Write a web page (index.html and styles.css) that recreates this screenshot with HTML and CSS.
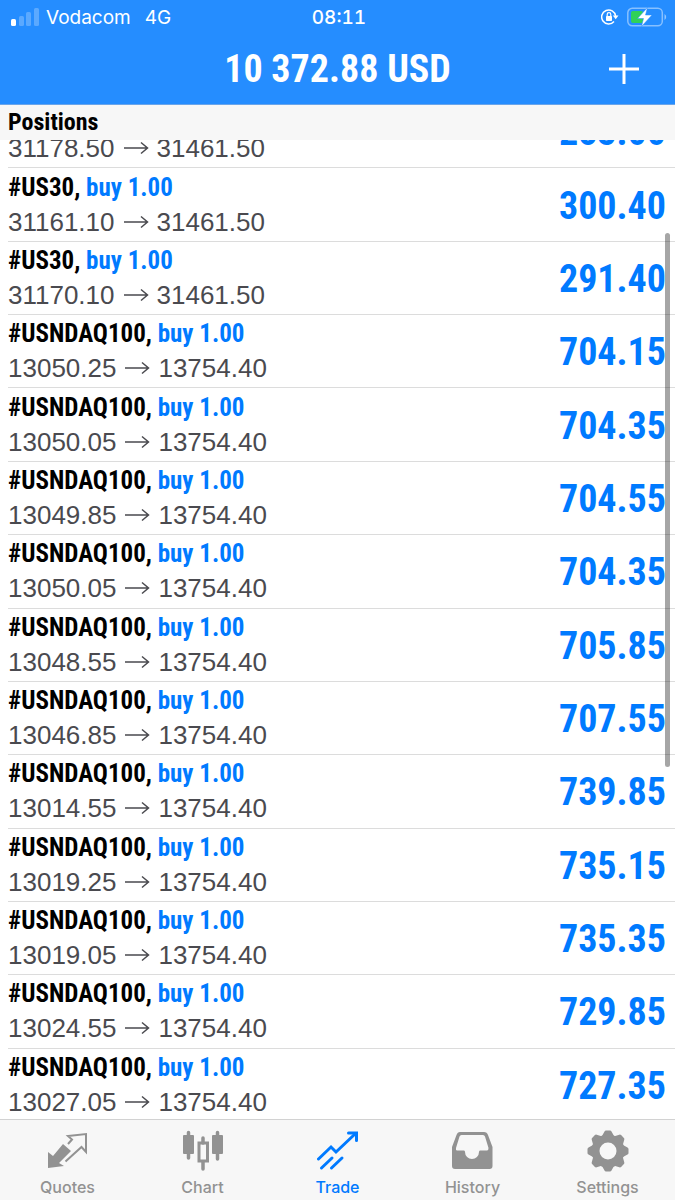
FILE: index.html
```html
<!DOCTYPE html>
<html lang="en">
<head>
  <meta charset="UTF-8">
  <meta name="viewport" content="width=device-width, initial-scale=1">
  <title>Trade</title>
  <link rel="stylesheet" href="styles.css">
</head>
<body>
  <svg class="defs" aria-hidden="true">
    <symbol id="arrow" viewBox="0 0 26 14">
      <path d="M1 7H24M18 1.500L24.500 7L18 12.500" fill="none" stroke="currentColor" stroke-width="1.500"/>
    </symbol>
  </svg>
  <div class="app">
    <header class="header">
      <div class="status">
        <div class="carrier">
          <svg width="28" height="18" viewBox="0 0 28 18" fill="#fff" aria-hidden="true">
            <rect x="0" y="11" width="5" height="7" rx="1.500"/>
            <rect x="8" y="8" width="5" height="10" rx="1.500" opacity=".25"/>
            <rect x="15" y="4" width="5" height="14" rx="1.500" opacity=".25"/>
            <rect x="23" y="0" width="5" height="18" rx="1.500" opacity=".25"/>
          </svg>
          <span>Vodacom</span>
          <span class="network">4G</span>
        </div>
        <span class="time">08:11</span>
        <div class="indicators">
          <svg width="18" height="16" viewBox="0 0 18 16" aria-hidden="true">
            <path d="M13 12.500A7 7 0 1 1 14.600 7" fill="none" stroke="#fff" stroke-width="1.500"/>
            <path d="M11.800 6.500H17.500L14.700 10.200Z" fill="#fff"/>
            <rect x="5" y="7" width="6" height="5" rx=".7" fill="#fff"/>
            <path d="M6.200 7.500V5.500A1.800 1.800 0 0 1 9.800 5.500V7.500" fill="none" stroke="#fff" stroke-width="1.200"/>
          </svg>
          <svg width="40" height="20" viewBox="0 0 40 20" aria-hidden="true">
            <rect x=".8" y="1.300" width="34.500" height="17.500" rx="4.500" fill="none" stroke="#fff" stroke-width="1.500" opacity=".45"/>
            <path d="M37.500 7A3.500 3.500 0 0 1 37.500 13Z" fill="#fff" opacity=".5"/>
            <rect x="4" y="4" width="12" height="12" rx="2" fill="#30d158"/>
            <path d="M20.500 .5L10.500 11.500H16.500L14.500 19.500L25 8H18.500Z" fill="#fff" stroke="#258dff" stroke-width=".5"/>
          </svg>
        </div>
      </div>
      <div class="title-bar">
        <h1>10 372.88 USD</h1>
        <button class="add" type="button" aria-label="New order">
          <svg width="30" height="30" viewBox="0 0 30 30" aria-hidden="true">
            <path d="M15 0V30M0 15H30" stroke="#fff" stroke-width="3"/>
          </svg>
        </button>
      </div>
    </header>

    <h2 class="section-title">Positions</h2>

    <main class="positions">
      <ul class="list">
        <li class="row">
          <div>
            <div class="symbol">#US30, <span class="buy">buy 1.00</span></div>
            <div class="prices">31178.50 <svg class="arrow"><use href="#arrow"/></svg> 31461.50</div>
          </div>
          <div class="profit">283.00</div>
        </li>
        <li class="row">
          <div>
            <div class="symbol">#US30, <span class="buy">buy 1.00</span></div>
            <div class="prices">31161.10 <svg class="arrow"><use href="#arrow"/></svg> 31461.50</div>
          </div>
          <div class="profit">300.40</div>
        </li>
        <li class="row">
          <div>
            <div class="symbol">#US30, <span class="buy">buy 1.00</span></div>
            <div class="prices">31170.10 <svg class="arrow"><use href="#arrow"/></svg> 31461.50</div>
          </div>
          <div class="profit">291.40</div>
        </li>
        <li class="row">
          <div>
            <div class="symbol">#USNDAQ100, <span class="buy">buy 1.00</span></div>
            <div class="prices">13050.25 <svg class="arrow"><use href="#arrow"/></svg> 13754.40</div>
          </div>
          <div class="profit">704.15</div>
        </li>
        <li class="row">
          <div>
            <div class="symbol">#USNDAQ100, <span class="buy">buy 1.00</span></div>
            <div class="prices">13050.05 <svg class="arrow"><use href="#arrow"/></svg> 13754.40</div>
          </div>
          <div class="profit">704.35</div>
        </li>
        <li class="row">
          <div>
            <div class="symbol">#USNDAQ100, <span class="buy">buy 1.00</span></div>
            <div class="prices">13049.85 <svg class="arrow"><use href="#arrow"/></svg> 13754.40</div>
          </div>
          <div class="profit">704.55</div>
        </li>
        <li class="row">
          <div>
            <div class="symbol">#USNDAQ100, <span class="buy">buy 1.00</span></div>
            <div class="prices">13050.05 <svg class="arrow"><use href="#arrow"/></svg> 13754.40</div>
          </div>
          <div class="profit">704.35</div>
        </li>
        <li class="row">
          <div>
            <div class="symbol">#USNDAQ100, <span class="buy">buy 1.00</span></div>
            <div class="prices">13048.55 <svg class="arrow"><use href="#arrow"/></svg> 13754.40</div>
          </div>
          <div class="profit">705.85</div>
        </li>
        <li class="row">
          <div>
            <div class="symbol">#USNDAQ100, <span class="buy">buy 1.00</span></div>
            <div class="prices">13046.85 <svg class="arrow"><use href="#arrow"/></svg> 13754.40</div>
          </div>
          <div class="profit">707.55</div>
        </li>
        <li class="row">
          <div>
            <div class="symbol">#USNDAQ100, <span class="buy">buy 1.00</span></div>
            <div class="prices">13014.55 <svg class="arrow"><use href="#arrow"/></svg> 13754.40</div>
          </div>
          <div class="profit">739.85</div>
        </li>
        <li class="row">
          <div>
            <div class="symbol">#USNDAQ100, <span class="buy">buy 1.00</span></div>
            <div class="prices">13019.25 <svg class="arrow"><use href="#arrow"/></svg> 13754.40</div>
          </div>
          <div class="profit">735.15</div>
        </li>
        <li class="row">
          <div>
            <div class="symbol">#USNDAQ100, <span class="buy">buy 1.00</span></div>
            <div class="prices">13019.05 <svg class="arrow"><use href="#arrow"/></svg> 13754.40</div>
          </div>
          <div class="profit">735.35</div>
        </li>
        <li class="row">
          <div>
            <div class="symbol">#USNDAQ100, <span class="buy">buy 1.00</span></div>
            <div class="prices">13024.55 <svg class="arrow"><use href="#arrow"/></svg> 13754.40</div>
          </div>
          <div class="profit">729.85</div>
        </li>
        <li class="row">
          <div>
            <div class="symbol">#USNDAQ100, <span class="buy">buy 1.00</span></div>
            <div class="prices">13027.05 <svg class="arrow"><use href="#arrow"/></svg> 13754.40</div>
          </div>
          <div class="profit">727.35</div>
        </li>
      </ul>
      <div class="scrollbar"></div>
    </main>

    <nav class="tabs">
      <a class="tab" href="#quotes">
        <svg width="42" height="42" viewBox="0 0 42 42" aria-hidden="true">
          <path d="M1 22L6 26L16 14L24 21L12 33L17 36L1 38Z" fill="currentColor"/>
          <path d="M21 14L25 9.500L21 6L39 4V22L34.500 17L18.500 31.500" fill="none" stroke="currentColor" stroke-width="2"/>
        </svg>
        <span>Quotes</span>
      </a>
      <a class="tab" href="#chart">
        <svg width="42" height="42" viewBox="0 0 42 42" aria-hidden="true">
          <path d="M6.500 2.500V28M35.500 2.500V29M21 8V13M21 32V39" stroke="currentColor" stroke-width="3.500" stroke-linecap="round"/>
          <rect x="1" y="5" width="11" height="19" rx="1" fill="currentColor"/>
          <rect x="30" y="5" width="11" height="19" rx="1" fill="currentColor"/>
          <rect x="17" y="13" width="8.500" height="18" fill="none" stroke="currentColor" stroke-width="3"/>
        </svg>
        <span>Chart</span>
      </a>
      <a class="tab active" href="#trade" aria-current="page">
        <svg width="42" height="42" viewBox="0 0 42 42" aria-hidden="true">
          <g fill="none" stroke="currentColor" stroke-width="3" stroke-linecap="round">
            <path d="M1.500 29L14 17L19 22L38 4"/>
            <path d="M31.500 3H39.500V10.500"/>
            <path d="M4.500 38L15 28M14.500 38L25 28"/>
          </g>
        </svg>
        <span>Trade</span>
      </a>
      <a class="tab" href="#history">
        <svg width="42" height="42" viewBox="0 0 42 42" aria-hidden="true">
          <path fill="currentColor" fill-rule="evenodd" d="M8 2H32Q35 2 36 5L40.500 17V36Q40.500 39 37.500 39H3Q0 39 0 36V17L4.500 5Q5.500 2 8 2ZM9.500 5Q8 5 7.500 6.500L4 18Q3.500 20.500 5 20.500H12Q13 20.500 13 22A7 7 0 0 0 27 22Q27 20.500 28 20.500H35Q36.500 20.500 36.500 18L33 6.500Q32.500 5 31 5Z"/>
        </svg>
        <span>History</span>
      </a>
      <a class="tab" href="#settings">
        <svg width="42" height="42" viewBox="0 0 42 42" aria-hidden="true">
          <circle cx="21" cy="21" r="12.500" fill="none" stroke="currentColor" stroke-width="8"/>
          <g fill="currentColor">
            <path id="tooth" d="M15 6L17.500 1.500Q18 .5 19 .5H23Q24 .5 24.500 1.500L27 6Z"/>
            <use href="#tooth" transform="rotate(45 21 21)"/>
            <use href="#tooth" transform="rotate(90 21 21)"/>
            <use href="#tooth" transform="rotate(135 21 21)"/>
            <use href="#tooth" transform="rotate(180 21 21)"/>
            <use href="#tooth" transform="rotate(225 21 21)"/>
            <use href="#tooth" transform="rotate(270 21 21)"/>
            <use href="#tooth" transform="rotate(315 21 21)"/>
          </g>
        </svg>
        <span>Settings</span>
      </a>
    </nav>
  </div>
</body>
</html>
```

FILE: styles.css
```css
* {
  box-sizing: border-box;
}
body {
  margin: 0;
  background: #fff;
  color: #000;
  font-family: Inter, "Liberation Sans", sans-serif;
}
.defs {
  display: none;
}
.app {
  display: flex;
  flex-direction: column;
  height: 100vh;
}

/* header */
.header {
  background: #258dff;
  color: #fff;
  border-bottom: 1px solid #6aa5ea;
}
.status {
  display: grid;
  grid-template-columns: 1fr auto 1fr;
  align-items: center;
  height: 34px;
  padding: 0 8px 0 11px;
  font-size: 19px;
}
.carrier,
.indicators {
  display: flex;
  align-items: center;
  gap: 7px;
}
.network {
  margin-left: 7px;
}
.time {
  font-weight: 500;
  font-variant-numeric: tabular-nums;
}
.indicators {
  justify-content: flex-end;
  gap: 8px;
}
.title-bar {
  display: grid;
  grid-template-columns: 1fr auto 1fr;
  align-items: center;
  height: 70px;
  padding: 0 36px;
}
h1,
.section-title,
.symbol,
.profit {
  font-family: "Roboto Condensed", Roboto, sans-serif;
  font-weight: bold;
}
h1 {
  grid-column: 2;
  margin: 0;
  font-size: 38px;
}
.add {
  justify-self: end;
  display: flex;
  padding: 0;
  border: 0;
  background: none;
}

/* positions */
.section-title {
  margin: 0;
  padding: 0 8px;
  background: #f7f7f7;
  font-size: 24px;
  line-height: 35px;
}
.positions {
  position: relative;
  flex: 1;
  min-height: 0;
  display: flex;
  overflow: hidden;
}
/* scrolled part way into the first row */
.list {
  flex: 1;
  display: flex;
  flex-direction: column;
  margin: -45px 0 -3px;
  padding: 0 0 0 8px;
  list-style: none;
}
.row {
  flex: 1;
  display: flex;
  align-items: center;
  justify-content: space-between;
  padding-right: 9px;
  border-bottom: 1px solid #dcdcdc;
}
.symbol {
  font-size: 25px;
  line-height: 34px;
}
.buy,
.profit {
  color: #007aff;
}
.prices {
  display: flex;
  align-items: center;
  gap: 8px;
  color: #4a4a4f;
  font-family: "Liberation Sans", sans-serif;
  font-size: 26px;
  line-height: 34px;
}
.arrow {
  width: 26px;
  height: 14px;
}
.profit {
  padding-top: 2px;
  font-size: 38px;
}
.scrollbar {
  position: absolute;
  top: 93px;
  right: 5px;
  width: 5px;
  height: 534px;
  border-radius: 3px;
  background: rgba(0, 0, 0, 0.35);
}

/* tab bar */
.tabs {
  display: flex;
  border-top: 1px solid #d2d2d2;
  background: #f7f7f7;
}
.tab {
  flex: 1;
  display: flex;
  flex-direction: column;
  align-items: center;
  gap: 5px;
  padding: 10px 0 2px;
  color: #929292;
  font-size: 16px;
  font-weight: 500;
  line-height: 21px;
  text-decoration: none;
}
.tab.active {
  color: #007aff;
}
```
